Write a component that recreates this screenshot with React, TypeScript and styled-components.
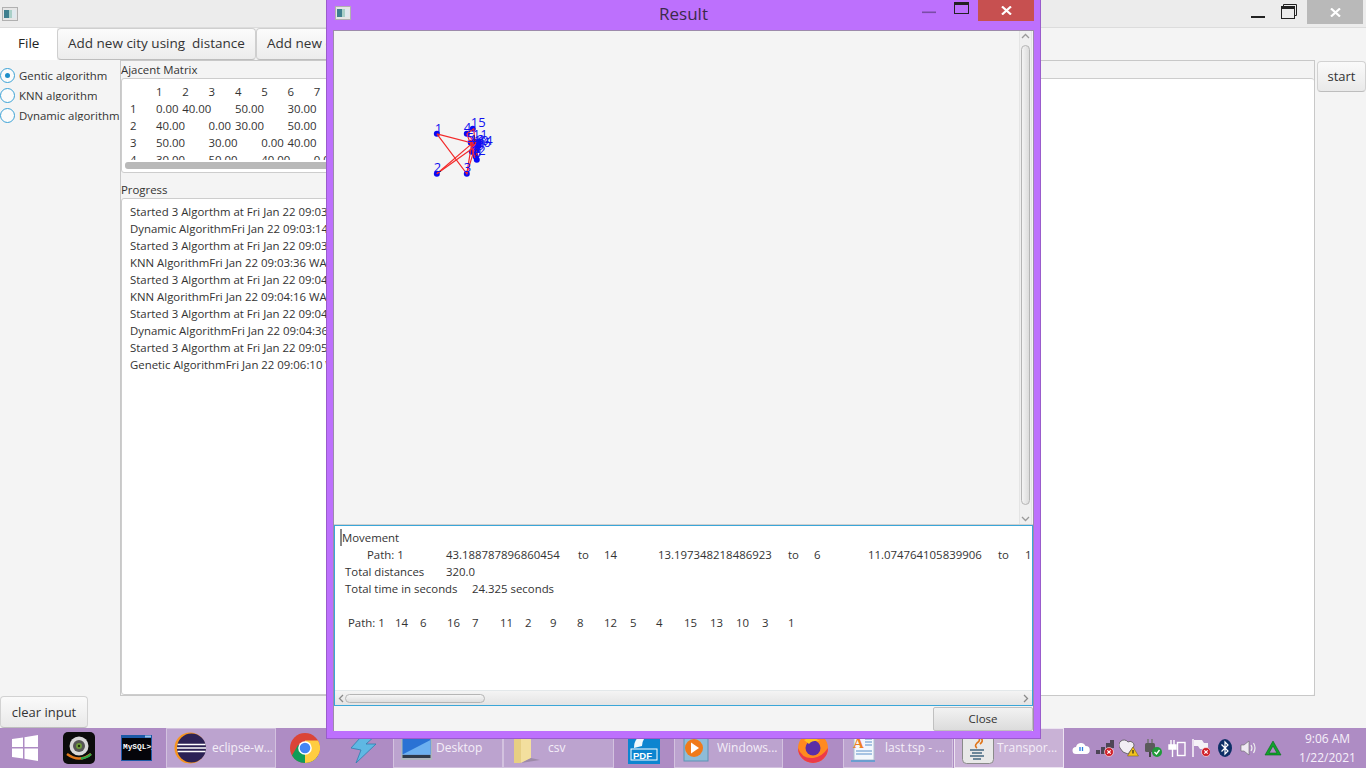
import React from 'react';
import styled, { createGlobalStyle } from 'styled-components';

const Global = createGlobalStyle`
  html, body { margin: 0; padding: 0; overflow: hidden; background: #f4f4f4; }
  * { box-sizing: border-box; }
`;

const FONT = `"Open Sans", "Noto Sans", "Liberation Sans", sans-serif`;

const Screen = styled.div`
  position: relative; width: 1366px; height: 768px; overflow: hidden;
  display: flex; flex-direction: column; background: #f4f4f4;
  font-family: ${FONT}; font-size: 11.4px; color: #333;
`;
const TitleBar = styled.div`
  height: 28px; flex: none; background: #ececec; border-bottom: 1px solid #dcdcdc;
  display: flex; align-items: flex-start; padding: 0 3px 0 2px;
`;
const AppIcon = styled.svg`
  width: 16px; height: 14px; margin-top: 7px; flex: none;
`;
const Spacer = styled.div`flex: 1;`;
const WinGlyph = styled.svg<{ $w: number }>`
  width: ${p => p.$w}px; height: 24px; flex: none; display: block;
`;
const CloseBox = styled.div<{ $bg: string; $h: number }>`
  width: 56px; height: ${p => p.$h}px; background: ${p => p.$bg}; flex: none;
  display: flex; align-items: center; justify-content: center;
`;
const Toolbar = styled.div`
  height: 32px; flex: none; display: flex; background: #f4f4f4;
`;
const FileTab = styled.div`
  width: 57px; background: #fff; padding-left: 18px; font-size: 13.5px; line-height: 30px; color: #222;
`;
const ToolButton = styled.button<{ $w: number }>`
  width: ${p => p.$w}px; height: 32px; padding: 0 0 2px 10px; text-align: left; font: 13.5px ${FONT}; color: #333;
  background: linear-gradient(#fbfbfb, #ececec); border: 1px solid #cfcfcf; border-bottom-color: #bdbdbd;
  border-radius: 4px; white-space: pre; overflow: hidden; flex: none;
`;
const Body = styled.div`
  flex: 1; min-height: 0; display: flex;
`;
const Side = styled.div`
  width: 120px; flex: none; padding-top: 7px; display: flex; flex-direction: column; gap: 4px;
`;
const RadioRow = styled.div`
  height: 16px; display: flex; align-items: center; gap: 4px; white-space: nowrap; overflow: hidden;
`;
const RadioMark = styled.div`
  width: 15px; height: 15px; border-radius: 50%; border: 1.6px solid #3ba2d6; background: #fbfbfb; flex: none;
  display: flex; align-items: center; justify-content: center;
`;
const RadioDot = styled.div`width: 5px; height: 5px; border-radius: 50%; background: #1f8fc9;`;
const RadioText = styled.div`height: 11px; line-height: 12px; overflow: hidden; color: #333;`;
const Center = styled.div`
  width: 1195px; flex: none; display: grid; grid-template-columns: 560px 1fr; border: 1px solid #c8c8c8; margin-bottom: 32px;
`;
const LeftCol = styled.div`display: flex; flex-direction: column; min-width: 0;`;
const PaneTitle = styled.div`
  height: 17px; line-height: 17px; color: #333; white-space: nowrap;
`;
const WhiteBox = styled.div`
  background: #fff; border: 1px solid #cdcdcd; border-radius: 3px;
`;
const MatrixBox = styled(WhiteBox)`
  height: 95px; position: relative; overflow: hidden; padding: 4px 0 0 8px;
`;
const MatrixClip = styled.div`height: 77px; overflow: hidden;`;
const MatrixRow = styled.div`
  display: grid; grid-template-columns: 26px repeat(7, 26.3px); height: 17px; line-height: 17px; white-space: nowrap;
`;
const HBarThumb = styled.div`
  position: absolute; left: 3px; right: 0; bottom: 3px; height: 7px; background: #b9b9b9; border-radius: 3px;
`;
const Gap = styled.div`height: 8px;`;
const ProgressBox = styled(WhiteBox)`
  flex: 1; padding: 4px 8px; overflow: hidden;
`;
const ProgressLine = styled.div`height: 17px; line-height: 17px; white-space: nowrap;`;
const RightCol = styled.div`display: flex; flex-direction: column;`;
const RightBox = styled(WhiteBox)`flex: 1; margin-top: 17px; border-right: none; border-bottom: none;`;
const StartCol = styled.div`flex: 1; padding: 1px 0 0 2px;`;
const PlainButton = styled.button<{ $w: number; $h: number }>`
  width: ${p => p.$w}px; height: ${p => p.$h}px; padding: 0 0 1px; font: 13px ${FONT}; color: #333;
  background: linear-gradient(#fafafa, #e9e9e9); border: 1px solid #d2d2d2; border-bottom-color: #bdbdbd; border-radius: 4px;
`;
const BottomBar = styled.div`
  position: absolute; left: 0; bottom: 40px; height: 32px;
`;
const Taskbar = styled.div`
  height: 40px; flex: none; background: #ae8cc4; display: flex; align-items: stretch; color: #fff; font-size: 12px;
`;
const Pinned = styled.div<{ $w: number }>`
  width: ${p => p.$w}px; flex: none; display: flex; align-items: center; justify-content: center;
`;
const Running = styled.div<{ $w: number; $ml?: number; $active?: boolean }>`
  width: ${p => p.$w}px; margin-left: ${p => p.$ml ?? 0}px; flex: none; display: flex; align-items: center; padding-left: 7px;
  background: ${p => (p.$active ? '#c9b2d6' : '#bca3cf')}; border: 1px solid ${p => (p.$active ? '#ece3f1' : '#d3c2df')};
  white-space: nowrap; overflow: hidden;
`;
const TaskLabel = styled.span<{ $ml: number }>`
  color: #f4eef8; font-size: 12px; margin-top: -2px; margin-left: ${p => p.$ml}px;
`;
const Tray = styled.div`
  display: flex; margin-left: 5px; align-items: center;
`;
const TraySlot = styled.div`
  width: 24px; height: 24px; display: flex; align-items: center; justify-content: center;
`;
const Clock = styled.div`
  width: 90px; margin-left: 4px; text-align: center; line-height: 19px; font-size: 12px; padding-top: 1px; color: #f6f0fa;
`;

const ResultWindow = styled.div`
  position: absolute; left: 326px; top: -1px; width: 715px; height: 740px; background: #bd70fd;
  border: 1px solid #9a5ccc; border-top: none; padding: 0 6px 7px 6px; display: flex; flex-direction: column;
`;
const ResultHead = styled.div`
  height: 31px; flex: none; position: relative; display: flex; justify-content: center; align-items: center;
`;
const ResultTitle = styled.div`font-size: 17px; color: #3c2a4a; padding-bottom: 2px;`;
const HeadLeft = styled.svg`position: absolute; left: 2px; top: 7px; width: 16px; height: 14px;`;
const HeadButtons = styled.div`
  position: absolute; right: 0; top: 0; display: flex; align-items: flex-start;
`;
const ResultInner = styled.div`
  flex: 1; min-height: 0; background: #f4f4f4; border: 1px solid #9d8aab; border-bottom: none; display: flex; flex-direction: column;
`;
const CanvasArea = styled.div`
  height: 494px; flex: none; display: flex; border-bottom: 1px solid #d0d0d0;
`;
const ChartSvg = styled.svg`flex: 1; display: block; min-width: 0; height: 100%;`;
const VScroll = styled.div`
  width: 13px; flex: none; margin-right: 1px; display: flex; flex-direction: column; align-items: center; background: #f0f0f0;
  border-left: 1px solid #e4e4e4; border-right: 1px solid #e4e4e4;
`;
const VThumb = styled.div`
  width: 9px; flex: 1; margin: 3px 0 8px; background: linear-gradient(90deg, #f4f4f4, #dcdcdc); border: 1px solid #b5b5b5; border-radius: 5px;
`;
const Chevron = styled.svg`width: 9px; height: 11px; flex: none; display: block;`;
const TextArea = styled.div`
  height: 181px; flex: none; background: #fff; border: 1px solid #3aa6d8; display: flex; flex-direction: column;
`;
const TextFlow = styled.div`flex: 1; min-height: 0; padding-top: 3px; overflow: hidden; position: relative;`;
const Caret = styled.div`position: absolute; left: 5px; top: 3px; width: 1.5px; height: 17px; background: #888;`;
const TextRow = styled.div<{ $pad: number }>`
  height: 17px; line-height: 17px; padding-left: ${p => p.$pad}px; white-space: nowrap; display: flex;
`;
const Cell = styled.span<{ $w: number }>`
  width: ${p => p.$w}px; flex: none; white-space: pre;
`;
const HScroll = styled.div`
  height: 15px; flex: none; background: linear-gradient(#f4f4f4, #e4e4e4); border-top: 1px solid #e3e8ea; display: flex; align-items: center; padding: 0 2px;
`;
const HThumb = styled.div`
  width: 140px; height: 9px; margin-left: -1px; background: linear-gradient(#f6f6f6, #dedede); border: 1px solid #b5b5b5; border-radius: 5px;
`;
const ResultFoot = styled.div`
  flex: 1; display: flex; justify-content: flex-end; align-items: flex-start; background: #f4f4f4; padding-top: 1px;
`;
const CloseButton = styled(PlainButton)`
  font-size: 11.5px; background: linear-gradient(#f2f2f2, #dcdcdc); border-color: #c0c0c0; border-radius: 2px;
`;

const AppGlyph = () => (
  <>
    <rect x="0.5" y="0.5" width="15" height="13" fill="#e6e6e6" stroke="#b0b0b0" />
    <rect x="2" y="3" width="5" height="8" fill="#3f7f8f" />
    <rect x="7" y="3" width="3" height="8" fill="#a9d0c8" />
    <rect x="10" y="3" width="4" height="8" fill="#dfe9ee" />
  </>
);

const XMark = ({ c }: { c: string }) => (
  <svg width="11" height="9" viewBox="0 0 11 9"><path d="M1 0.5 L10 8.5 M10 0.5 L1 8.5" stroke={c} strokeWidth="2.2" /></svg>
);

const rows: string[][] = [
  ['', '1', '2', '3', '4', '5', '6', '7'],
  ['1', '0.00', '40.00', '', '50.00', '', '30.00', ''],
  ['2', '40.00', '', '0.00', '30.00', '', '50.00', ''],
  ['3', '50.00', '', '30.00', '', '0.00', '40.00', ''],
  ['4', '30.00', '', '50.00', '', '40.00', '', '0.00'],
];

const progress = [
  'Started 3 Algorthm at Fri Jan 22 09:03:14 WAT 2021',
  'Dynamic AlgorithmFri Jan 22 09:03:14 WAT 2021',
  'Started 3 Algorthm at Fri Jan 22 09:03:36 WAT 2021',
  'KNN AlgorithmFri Jan 22 09:03:36 WAT 2021',
  'Started 3 Algorthm at Fri Jan 22 09:04:16 WAT 2021',
  'KNN AlgorithmFri Jan 22 09:04:16 WAT 2021',
  'Started 3 Algorthm at Fri Jan 22 09:04:36 WAT 2021',
  'Dynamic AlgorithmFri Jan 22 09:04:36 WAT 2021',
  'Started 3 Algorthm at Fri Jan 22 09:05:46 WAT 2021',
  'Genetic AlgorithmFri Jan 22 09:06:10 WAT 2021',
];

type P = [string, number];
const pathLine: P[] = [['Path: 1', 367], ['43.188787896860454', 446], ['to', 578], ['14', 604], ['13.197348218486923', 658], ['to', 788], ['6', 814], ['11.074764105839906', 868], ['to', 998], ['1', 1025]];
const distLine: P[] = [['Total distances', 345], ['320.0', 446]];
const timeLine: P[] = [['Total time in seconds', 345], ['24.325 seconds', 472]];
const finalLine: P[] = [['Path: 1', 348], ['14', 395], ['6', 420], ['16', 447], ['7', 472], ['11', 500], ['2', 525], ['9', 550], ['8', 577], ['12', 604], ['5', 630], ['4', 656], ['15', 684], ['13', 710], ['10', 736], ['3', 762], ['1', 788]];

const Row = ({ cells }: { cells: P[] }) => (
  <TextRow $pad={cells[0][1] - 335}>
    {cells.map(([t, x], i) => (
      <Cell key={i} $w={i < cells.length - 1 ? cells[i + 1][1] - x : 40}>{t}</Cell>
    ))}
  </TextRow>
);

const pts: [number, number][] = [[436, 134], [436, 174], [466, 174], [466, 134], [472, 129], [470, 143], [474, 142], [476, 150], [474, 154], [476, 160], [478, 146], [471, 152], [473, 147], [478, 142], [475, 157]];
const labels: [string, number, number][] = [
  ['1', 434, 133], ['2', 433, 172], ['3', 463, 172], ['4', 463, 132], ['15', 470, 127],
  ['5', 466, 142], ['11', 472, 139], ['13', 469, 144], ['10', 473, 145], ['14', 477, 145], ['16', 475, 147], ['7', 471, 150], ['8', 473, 153], ['9', 476, 150], ['6', 473, 157], ['12', 470, 155],
];
const redPaths = [
  'M436,134 L471,143 L466,174 L436,134',
  'M436,174 L472,143',
  'M436,174 L474,147',
  'M466,134 L473,129 L474,142 L466,134',
  'M466,134 L472,150 L474,158',
  'M466,174 L474,148',
];

const Chart = () => (
  <ChartSvg viewBox="333 31 686 493" preserveAspectRatio="xMinYMin">
    {pts.map(([x, y], i) => <circle key={i} cx={x} cy={y} r="3" fill="#0a0af5" />)}
    {redPaths.map((d, i) => <path key={i} d={d} fill="none" stroke="#f32a2a" strokeWidth="1.2" />)}
    <path d="M470,140 L476,154 M473,140 L476,156 M475,141 L472,153 M471,144 L475,152" stroke="#e8222a" strokeWidth="1.8" fill="none" />
    {labels.map(([t, x, y], i) => (
      <text key={i} x={x} y={y} fontFamily={FONT} fontSize="13" fill="#1010f0">{t}</text>
    ))}
  </ChartSvg>
);

const Up = () => <Chevron viewBox="0 0 9 11"><path d="M1 7 L4.5 3.5 L8 7" fill="none" stroke="#9a9a9a" strokeWidth="1.3" /></Chevron>;
const Down = () => <Chevron viewBox="0 0 9 11"><path d="M1 4 L4.5 7.5 L8 4" fill="none" stroke="#9a9a9a" strokeWidth="1.3" /></Chevron>;
const Left = () => <Chevron viewBox="0 0 9 11"><path d="M6 2 L2.5 5.5 L6 9" fill="none" stroke="#8a8a8a" strokeWidth="1.3" /></Chevron>;
const Right = () => <Chevron viewBox="0 0 9 11"><path d="M3 2 L6.5 5.5 L3 9" fill="none" stroke="#8a8a8a" strokeWidth="1.3" /></Chevron>;

const WinLogo = () => (
  <svg width="28" height="28" viewBox="0 0 28 28"><path d="M1 5 L12 3.4 V13 H1 Z M13.5 3.2 L27 1 V13 H13.5 Z M1 14.5 H12 V24.5 L1 23 Z M13.5 14.5 H27 V27 L13.5 24.8 Z" fill="#fff" /></svg>
);
const QuickCam = () => (
  <svg width="32" height="32" viewBox="0 0 32 32">
    <rect width="32" height="32" rx="5" fill="#0c0c0c" />
    <circle cx="16" cy="14" r="9.5" fill="#d9d9d9" /><circle cx="16" cy="14" r="6" fill="#555" /><circle cx="16" cy="14" r="3" fill="#6d9b3a" /><circle cx="16" cy="14" r="1.2" fill="#1d2f0c" />
    <path d="M4 22 Q16 31 28 22" fill="none" stroke="#e2791d" strokeWidth="2.4" />
    <path d="M18 26.5 Q24 26 28 22" fill="none" stroke="#2aa84a" strokeWidth="2.4" />
  </svg>
);
const MySql = () => (
  <svg width="31" height="26" viewBox="0 0 31 26">
    <rect width="31" height="26" fill="#1c5aa6" /><rect x="1" y="3" width="29" height="22" fill="#05050a" />
    <rect x="24" y="0.5" width="6" height="2" fill="#9cc4ea" />
    <text x="2" y="14" fontFamily="Liberation Mono, monospace" fontSize="7.8" fontWeight="700" fill="#fff">MySQL&gt;_</text>
  </svg>
);
const Eclipse = () => (
  <svg width="32" height="32" viewBox="0 0 32 32">
    <circle cx="16" cy="16" r="15.5" fill="#f7941e" /><circle cx="17.5" cy="16" r="14.5" fill="#2c2255" />
    <path d="M3.5 12.5 H31.5 M3 16 H32 M3.5 19.5 H31.5" stroke="#fff" strokeWidth="1.5" />
  </svg>
);
const Chrome = () => (
  <svg width="30" height="30" viewBox="0 0 30 30">
    <circle cx="15" cy="15" r="15" fill="#db4437" />
    <path d="M15 15 L28 22.5 A15 15 0 0 1 15 30 A15 15 0 0 1 2 22.5 L8 12 Z" fill="#0f9d58" />
    <path d="M15 15 L15 30 A15 15 0 0 0 28 22.5 A15 15 0 0 0 28 7.5 L15 7.5 Z" fill="#ffcd40" />
    <circle cx="15" cy="15" r="6.8" fill="#fff" /><circle cx="15" cy="15" r="5.3" fill="#4285f4" />
  </svg>
);
const Bolt = () => (
  <svg width="26" height="30" viewBox="0 0 26 30"><path d="M9 5 L25 2 L15 11 L25 11 L5 30 L10 17 L0 15 Z" fill="#5fb8e3" stroke="#2f7fae" strokeWidth="0.8" /></svg>
);
const DesktopIcon = () => (
  <svg width="31" height="24" viewBox="0 0 31 24">
    <rect width="31" height="24" fill="#aeb4bc" /><rect x="1.5" y="1.5" width="28" height="17" fill="#2a72d4" />
    <path d="M1.5 18.5 L29.5 4 V18.5 Z" fill="#6cb0f0" /><rect x="1.5" y="19" width="28" height="3" fill="#2e3a4a" />
  </svg>
);
const Folder = () => (
  <svg width="30" height="32" viewBox="0 0 30 32">
    <path d="M3 2 H8 L10 4 H20 V26 L9 31 H3 Z" fill="#e7cf83" /><path d="M10 6 L20 3 V26 L10 31 Z" fill="#f3df9e" /><path d="M20 26 L29 28 L10 31 Z" fill="#9d8aa8" />
  </svg>
);
const Pdf = () => (
  <svg width="32" height="32" viewBox="0 0 32 32">
    <rect y="2" width="32" height="30" fill="#0d85d0" />
    <path d="M6 16 Q6 4 18 2 H22 Q14 6 14 14 Z" fill="#fff" opacity="0.95" />
    <rect x="3" y="17" width="26" height="11" fill="none" stroke="#fff" />
    <text x="5" y="26.5" fontFamily="Liberation Sans, sans-serif" fontSize="9.5" fontWeight="700" fill="#fff">PDF</text>
  </svg>
);
const Wmp = () => (
  <svg width="28" height="32" viewBox="0 0 28 32">
    <rect x="2" y="3" width="24" height="26" fill="#8ebcd8" stroke="#5e93b4" /><circle cx="12" cy="16" r="9" fill="#f07a1a" /><path d="M9 10.5 L17 16 L9 21.5 Z" fill="#fff" />
  </svg>
);
const Firefox = () => (
  <svg width="30" height="30" viewBox="0 0 30 30">
    <circle cx="15" cy="15" r="15" fill="#ff8a1f" /><path d="M30 15 A15 15 0 0 1 0 15 Q4 26 15 25 Q24 24 30 15 Z" fill="#ec3a4a" />
    <circle cx="15" cy="15" r="7.5" fill="#5a2ea6" /><path d="M6 7 Q14 2 22 8 Q14 7 11 11 Z" fill="#ffc21f" />
  </svg>
);
const DocIcon = () => (
  <svg width="24" height="30" viewBox="0 0 24 30">
    <rect x="3" y="0" width="20" height="27" fill="#f3f7fc" stroke="#aebfd0" />
    <text x="2" y="15" fontFamily="Liberation Serif, serif" fontSize="15" fontWeight="700" fill="#f08020">A</text>
    <path d="M14 6 H21 M14 9 H21 M14 12 H21 M5 18 H21 M5 21 H21" stroke="#5b8fc9" strokeWidth="1" />
    <path d="M0 27 H24 V29 H0 Z" fill="#6b9fd0" />
  </svg>
);
const JavaIcon = () => (
  <svg width="32" height="32" viewBox="0 0 32 32">
    <rect x="0.5" y="0.5" width="31" height="31" rx="4" fill="#e8e8e8" stroke="#8a8a8a" />
    <path d="M15 4 Q20 8 15 11 Q12 14 15 16 M19 6 Q22 9 18 12" fill="none" stroke="#e07418" strokeWidth="1.6" />
    <path d="M8 18 H22 M10 21 H20 M8 24 H22 M11 27 H19" stroke="#41657f" strokeWidth="1.4" />
  </svg>
);

const CloudTray = () => (
  <svg width="18" height="14" viewBox="0 0 18 14"><path d="M4 13 A3.5 3.5 0 0 1 4 6 A5 5 0 0 1 13.5 5 A4 4 0 0 1 14 13 Z" fill="#fff" /><path d="M8 6 V10 M10.5 6 V10" stroke="#2a7de1" strokeWidth="1.3" /></svg>
);
const Badge = ({ c }: { c: string }) => <circle cx="14" cy="13" r="4.5" fill={c} stroke="#fff" strokeWidth="0.6" />;
const SignalTray = () => (
  <svg width="20" height="18" viewBox="0 0 20 18"><path d="M1 11 H5 V15 H1 Z M6 8 H10 V15 H6 Z M11 4 H15 V10 H11 Z M15 1 H19 V9 H15 Z" fill="#4d4656" /><Badge c="#d0202a" /><path d="M12.3 11.3 L15.7 14.7 M15.7 11.3 L12.3 14.7" stroke="#fff" strokeWidth="1.2" /></svg>
);
const WifiTray = () => (
  <svg width="20" height="18" viewBox="0 0 20 18"><path d="M1 9 A5 5 0 0 1 9 3 A4 4 0 0 1 15 7 L9 15 L4 13 Z" fill="#f2eef4" stroke="#555" strokeWidth="0.8" /><path d="M14 8 L19.5 17 H8.5 Z" fill="#f2c21d" stroke="#6b5a10" strokeWidth="0.5" /><path d="M14 11 V14.5" stroke="#222" strokeWidth="1.2" /></svg>
);
const PlugTray = () => (
  <svg width="20" height="20" viewBox="0 0 20 20"><path d="M5 1 V5 M9 1 V5" stroke="#777" strokeWidth="1.6" /><rect x="2" y="5" width="10" height="9" rx="1.5" fill="#5a5a5a" /><path d="M7 14 V19" stroke="#444" strokeWidth="2" /><circle cx="14" cy="14" r="5" fill="#1f9a3a" /><path d="M11.5 14 L13.5 16 L16.5 12" fill="none" stroke="#fff" strokeWidth="1.3" /></svg>
);
const BatteryTray = () => (
  <svg width="18" height="17" viewBox="0 0 18 17"><path d="M3 0 V5 M6 0 V5 M1 5 H8 V9 H1 Z M4.5 9 V17" stroke="#fff" strokeWidth="1.4" fill="#fff" /><rect x="9.5" y="2.5" width="7.5" height="13" fill="#b290c6" stroke="#fff" strokeWidth="1.4" /></svg>
);
const FlagTray = () => (
  <svg width="18" height="18" viewBox="0 0 18 18"><path d="M1 0 V18" stroke="#fff" strokeWidth="1.4" /><path d="M2 1 H10 L12 4 H16 V10 H8 L6 7 H2 Z" fill="#f5f2f7" /><Badge c="#d0202a" /><path d="M12.3 11.3 L15.7 14.7 M15.7 11.3 L12.3 14.7" stroke="#fff" strokeWidth="1.2" /></svg>
);
const BtTray = () => (
  <svg width="14" height="18" viewBox="0 0 14 18"><ellipse cx="7" cy="9" rx="7" ry="9" fill="#0c2f66" /><path d="M3.5 5.5 L10 12 L7 15 V3 L10 6 L3.5 12.5" fill="none" stroke="#fff" strokeWidth="1.2" /></svg>
);
const SpeakerTray = () => (
  <svg width="18" height="16" viewBox="0 0 18 16"><path d="M1 5 H4 L9 1 V15 L4 11 H1 Z" fill="#efe9f3" stroke="#6a6a6a" strokeWidth="0.6" /><path d="M11 5 Q13 8 11 11 M13.5 3 Q16.5 8 13.5 13" fill="none" stroke="#eee" strokeWidth="1.2" /></svg>
);
const TriTray = () => (
  <svg width="18" height="16" viewBox="0 0 18 16"><path d="M9 1 L17 15 H1 Z M9 6 L5 13 H13 Z" fill="#0fa32a" fillRule="evenodd" stroke="#06671a" strokeWidth="0.6" /></svg>
);

export default function App() {
  return (
    <Screen>
      <Global />
      <TitleBar>
        <AppIcon viewBox="0 0 16 14"><AppGlyph /></AppIcon>
        <Spacer />
        <WinGlyph $w={32} viewBox="0 0 32 24"><rect x="3" y="16" width="14" height="2" fill="#222" /></WinGlyph>
        <WinGlyph $w={18} viewBox="0 0 18 24"><path d="M3.5 6.5 V4.5 H16.5 V15.5 H14.5" fill="none" stroke="#222" /><rect x="1.5" y="6.5" width="13" height="12" fill="none" stroke="#222" /><rect x="1" y="6" width="14" height="3" fill="#222" /></WinGlyph>
        <WinGlyph $w={9} viewBox="0 0 9 24" />
        <CloseBox $bg="#b9b9b9" $h={24}><XMark c="#fff" /></CloseBox>
      </TitleBar>
      <Toolbar>
        <FileTab>File</FileTab>
        <ToolButton $w={199}>Add new city using  distance</ToolButton>
        <ToolButton $w={200}>Add new city using  point</ToolButton>
      </Toolbar>
      <Body>
        <Side>
          <RadioRow><RadioMark><RadioDot /></RadioMark><RadioText>Gentic algorithm</RadioText></RadioRow>
          <RadioRow><RadioMark /><RadioText>KNN algorithm</RadioText></RadioRow>
          <RadioRow><RadioMark /><RadioText>Dynamic algorithm</RadioText></RadioRow>
        </Side>
        <Center>
          <LeftCol>
            <PaneTitle>Ajacent Matrix</PaneTitle>
            <MatrixBox>
              <MatrixClip>
                {rows.map((r, i) => (
                  <MatrixRow key={i}>{r.map((c, j) => <span key={j}>{c}</span>)}</MatrixRow>
                ))}
              </MatrixClip>
              <HBarThumb />
            </MatrixBox>
            <Gap />
            <PaneTitle>Progress</PaneTitle>
            <ProgressBox>
              {progress.map((p, i) => <ProgressLine key={i}>{p}</ProgressLine>)}
            </ProgressBox>
          </LeftCol>
          <RightCol>
            <RightBox />
          </RightCol>
        </Center>
        <StartCol><PlainButton $w={49} $h={31}>start</PlainButton></StartCol>
      </Body>
      <BottomBar><PlainButton $w={88} $h={32}>clear input</PlainButton></BottomBar>
      <Taskbar>
        <Pinned $w={50}><WinLogo /></Pinned>
        <Pinned $w={57}><QuickCam /></Pinned>
        <Pinned $w={59}><MySql /></Pinned>
        <Running $w={110}><Eclipse /><TaskLabel $ml={6}>eclipse-w...</TaskLabel></Running>
        <Pinned $w={58}><Chrome /></Pinned>
        <Pinned $w={59}><Bolt /></Pinned>
        <Running $w={110}><DesktopIcon /><TaskLabel $ml={4}>Desktop</TaskLabel></Running>
        <Running $w={111}><Folder /><TaskLabel $ml={7}>csv</TaskLabel></Running>
        <Pinned $w={60}><Pdf /></Pinned>
        <Running $w={109}><Wmp /><TaskLabel $ml={7}>Windows...</TaskLabel></Running>
        <Pinned $w={60}><Firefox /></Pinned>
        <Running $w={110}><DocIcon /><TaskLabel $ml={10}>last.tsp - ...</TaskLabel></Running>
        <Running $w={110} $ml={1} $active><JavaIcon /><TaskLabel $ml={3}>Transpor...</TaskLabel></Running>
        <Tray>
          <TraySlot><CloudTray /></TraySlot>
          <TraySlot><SignalTray /></TraySlot>
          <TraySlot><WifiTray /></TraySlot>
          <TraySlot><PlugTray /></TraySlot>
          <TraySlot><BatteryTray /></TraySlot>
          <TraySlot><FlagTray /></TraySlot>
          <TraySlot><BtTray /></TraySlot>
          <TraySlot><SpeakerTray /></TraySlot>
          <TraySlot><TriTray /></TraySlot>
        </Tray>
        <Clock>9:06 AM<br />1/22/2021</Clock>
      </Taskbar>
      <ResultWindow>
        <ResultHead>
          <HeadLeft viewBox="0 0 16 14"><AppGlyph /></HeadLeft>
          <ResultTitle>Result</ResultTitle>
          <HeadButtons>
            <WinGlyph $w={32} viewBox="0 0 32 24"><rect x="0" y="12.5" width="14" height="1.6" fill="#7a4ca6" /></WinGlyph>
            <WinGlyph $w={24} viewBox="0 0 24 24"><rect x="0.5" y="3.5" width="14" height="11" fill="none" stroke="#222" /><rect x="0" y="3" width="15" height="3" fill="#222" /></WinGlyph>
            <CloseBox $bg="#c75050" $h={22}><XMark c="#fff" /></CloseBox>
          </HeadButtons>
        </ResultHead>
        <ResultInner>
          <CanvasArea>
            <Chart />
            <VScroll>
              <Up />
              <VThumb />
              <Down />
            </VScroll>
          </CanvasArea>
          <TextArea>
            <TextFlow>
              <Caret />
              <TextRow $pad={7}>Movement</TextRow>
              <Row cells={pathLine} />
              <Row cells={distLine} />
              <Row cells={timeLine} />
              <TextRow $pad={0} />
              <Row cells={finalLine} />
            </TextFlow>
            <HScroll>
              <Left />
              <HThumb />
              <Spacer />
              <Right />
            </HScroll>
          </TextArea>
          <ResultFoot><CloseButton $w={100} $h={24}>Close</CloseButton></ResultFoot>
        </ResultInner>
      </ResultWindow>
    </Screen>
  );
}
